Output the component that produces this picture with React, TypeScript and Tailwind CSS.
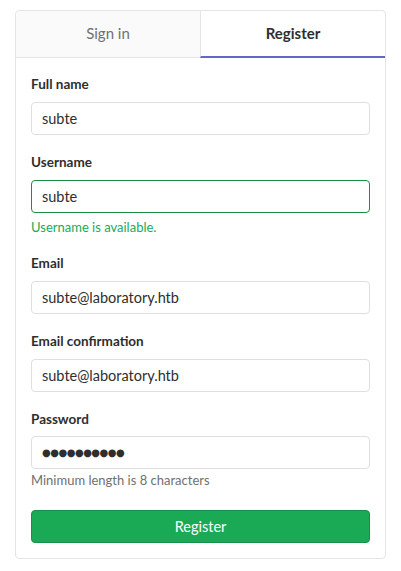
import { useState } from 'react';

const fields = [
  { label: 'Full name', value: 'subte' },
  { label: 'Username', value: 'subte', valid: true },
  { label: 'Email', value: 'subte@laboratory.htb' },
  { label: 'Email confirmation', value: 'subte@laboratory.htb' },
];

export default function App() {
  const [tab, setTab] = useState('register');

  return (
    <div className="min-h-[571px] bg-white px-[15px] pt-[10px] font-['Lato',sans-serif] text-[#2e2e2e]">
      <div className="rounded-[4px] border border-[#e5e5e5] bg-white">
        {/* Tabs */}
        <div className="flex h-[47px]">
          <button
            onClick={() => setTab('signin')}
            className="flex-1 rounded-tl-[4px] border-b border-[#e5e5e5] bg-[#fafafa] pb-[2px] text-[15px] text-[#707070]"
          >
            Sign in
          </button>
          <button
            onClick={() => setTab('register')}
            className={`flex-1 border-l border-[#e5e5e5] text-[15px] font-bold ${
              tab === 'register' ? 'border-b-2 border-b-[#6666c4]' : ''
            }`}
          >
            Register
          </button>
        </div>

        {/* Form */}
        <form className="px-[15px] pb-[15px] pt-[16px]" onSubmit={(e) => e.preventDefault()}>
          {fields.map((f) => (
            <div key={f.label} className="mb-[17px]">
              <label className="mb-[8px] block text-[13.5px] font-bold leading-[20px]">{f.label}</label>
              <input
                readOnly
                value={f.value}
                className={`block h-[33px] w-full rounded-[4px] border px-[10px] text-[14.5px] text-[#2e2e2e] outline-none ${
                  f.valid ? 'border-[#168f48]' : 'border-[#dfdfdf]'
                }`}
              />
              {f.valid && (
                <p className="mt-[5px] text-[13px] leading-[18px] text-[#1aaa55]">Username is available.</p>
              )}
            </div>
          ))}

          <div>
            <label className="mb-[7px] block text-[13.5px] font-bold leading-[20px]">Password</label>
            <input
              readOnly
              value="●●●●●●●●●●"
              className="block h-[33px] w-full rounded-[4px] border border-[#dfdfdf] px-[10px] font-['DejaVu_Sans',sans-serif] text-[10px] tracking-[-0.5px] text-[#2e2e2e] outline-none"
            />
            <p className="mt-[2px] text-[13px] leading-[18px] text-[#707070]">Minimum length is 8 characters</p>
          </div>

          <button
            type="submit"
            className="mt-[21px] block h-[33px] w-full rounded-[4px] border border-[#168f48] bg-[#1aaa55] text-[14.5px] text-white"
          >
            Register
          </button>
        </form>
      </div>
    </div>
  );
}
